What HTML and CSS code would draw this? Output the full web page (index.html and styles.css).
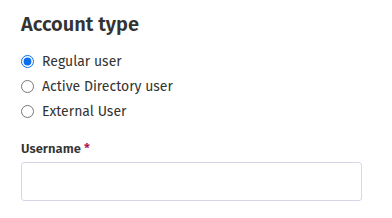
FILE: index.html
```html
<!DOCTYPE html>
<html lang="en">
<head>
    <meta charset="UTF-8">
    <title>Account type</title>
    <link rel="stylesheet" href="styles.css">
</head>
<body>
    <div class="form">
        <h2>Account type</h2>

        <div class="radio-group">
            <label class="radio">
                <input type="radio" name="type" checked>
                <span>Regular user</span>
            </label>
            <label class="radio">
                <input type="radio" name="type">
                <span>Active Directory user</span>
            </label>
            <label class="radio">
                <input type="radio" name="type">
                <span>External User</span>
            </label>
        </div>

        <div class="field">
            <label class="field-label" for="username">Username <span class="required">*</span></label>
            <input type="text" id="username" class="text-input">
        </div>
    </div>
</body>
</html>
```

FILE: styles.css
```css
* {
    margin: 0;
    padding: 0;
    box-sizing: border-box;
}

body {
    font-family: 'Fira Sans', Lato, 'Open Sans', sans-serif;
    background: #fff;
    color: #333;
}

.form {
    padding: 12px 30px 0 21px;
}

h2 {
    font-size: 20px;
    font-weight: 600;
    color: #333;
    margin-bottom: 15px;
}

.radio-group {
    display: flex;
    flex-direction: column;
    gap: 5px;
    margin-bottom: 20px;
}

.radio {
    display: flex;
    align-items: center;
    gap: 8px;
    font-size: 14px;
    height: 20px;
}

.radio input {
    width: 13px;
    height: 13px;
    accent-color: #0b6ef0;
    margin: 0;
}

.field {
    display: flex;
    flex-direction: column;
    gap: 6px;
}

.field-label {
    font-size: 13px;
    font-weight: 600;
    color: #333;
}

.required {
    color: #b0124a;
}

.text-input {
    width: 341px;
    height: 39px;
    border: 1px solid #d6d6e6;
    border-radius: 3px;
    font-size: 14px;
    padding: 0 10px;
}
```
